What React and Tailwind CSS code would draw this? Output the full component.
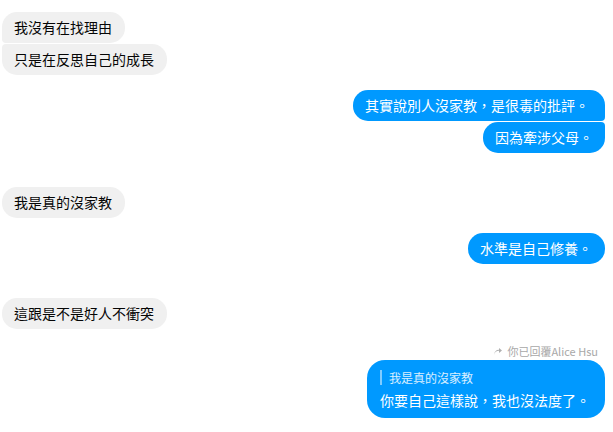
import React from 'react';

const FONT = { fontFamily: '"Microsoft JhengHei", "Noto Sans CJK TC", "Noto Sans", sans-serif' };

function InBubble({ text, shape }) {
  return (
    <div className={`bg-[#f0f0f0] text-[#050505] text-[14px] leading-[19px] pl-3 pr-[13px] py-[6px] ${shape}`}>
      {text}
    </div>
  );
}

function OutBubble({ text, shape, pad = 'pl-3 pr-3' }) {
  return (
    <div className={`bg-[#0099ff] text-white text-[14px] leading-[19px] py-[6px] ${pad} ${shape}`}>
      {text}
    </div>
  );
}

function ReplyIcon() {
  return (
    <svg width="8" height="7" viewBox="0 0 8 7" className="mr-[5px]">
      <path d="M0 7 C0.5 4 2.5 2.8 5 2.8 V5 L8 2.5 L5 0 V1.8 C2 1.8 0.3 3.8 0 7 Z" fill="#b0b0b0" />
    </svg>
  );
}

export default function App() {
  return (
    <div className="w-[613px] h-[432px] bg-white overflow-hidden pt-3 pl-0.5 pr-2" style={FONT}>
      <div className="flex flex-col items-start gap-px">
        <InBubble text="我沒有在找理由" shape="rounded-tl-[15px] rounded-tr-[15px] rounded-br-[15px] rounded-bl-[4px]" />
        <InBubble text="只是在反思自己的成長" shape="rounded-tl-[4px] rounded-tr-[15px] rounded-br-[15px] rounded-bl-[15px]" />
      </div>

      <div className="flex flex-col items-end gap-px mt-[15px]">
        <OutBubble text="其實說別人沒家教，是很毒的批評。" pad="pl-3 pr-4" shape="rounded-tl-[15px] rounded-tr-[15px] rounded-br-[4px] rounded-bl-[15px]" />
        <OutBubble text="因為牽涉父母。" shape="rounded-tl-[15px] rounded-tr-[4px] rounded-br-[15px] rounded-bl-[15px]" />
      </div>

      <div className="flex flex-col items-start mt-[34px]">
        <InBubble text="我是真的沒家教" shape="rounded-[15px]" />
      </div>

      <div className="flex flex-col items-end mt-[15px]">
        <OutBubble text="水準是自己修養。" pad="pl-3 pr-[13px]" shape="rounded-[15px]" />
      </div>

      <div className="flex flex-col items-start mt-[34px]">
        <InBubble text="這跟是不是好人不衝突" shape="rounded-[15px]" />
      </div>

      <div className="flex flex-col items-end mt-[15px]">
        <div className="flex items-center pr-[7px] text-[11px] leading-[14px] text-[#a8a8a8]">
          <ReplyIcon />
          <span>你已回覆Alice Hsu</span>
        </div>
        <div className="mt-[2px] bg-[#0099ff] text-white rounded-[18px] pl-[13px] pr-[15px] pt-[10px] pb-[9px]">
          <div className="flex items-center">
            <div className="w-[2px] h-[15px] bg-white/50 mr-[7px]" />
            <span className="text-[12px] leading-[15px] text-white/85">我是真的沒家教</span>
          </div>
          <div className="mt-[6px] text-[14px] leading-[18px]">你要自己這樣說，我也沒法度了。</div>
        </div>
      </div>
    </div>
  );
}
